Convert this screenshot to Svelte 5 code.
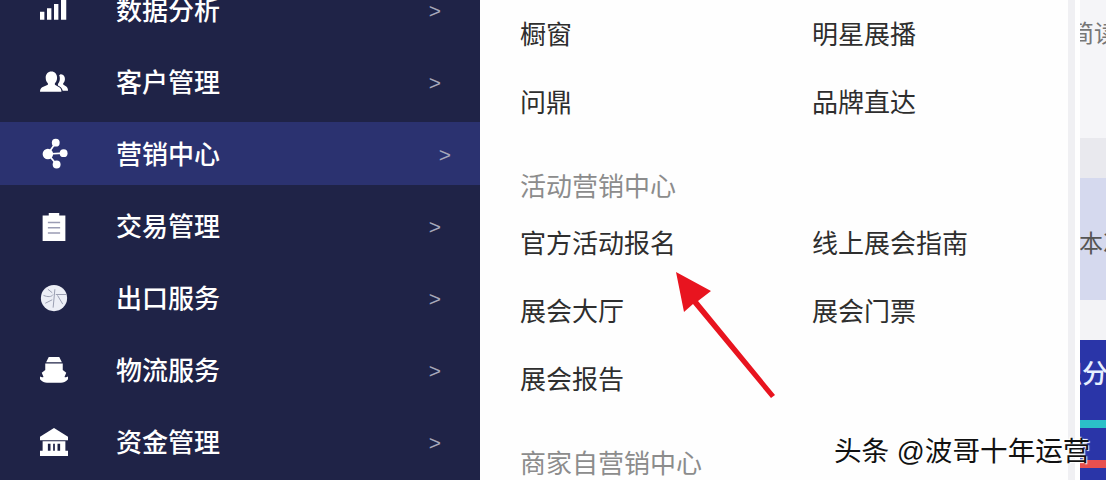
<script lang="ts">
  const navItems = [
    { label: "数据分析", icon: "chart" },
    { label: "客户管理", icon: "users" },
    { label: "营销中心", icon: "nodes", active: true },
    { label: "交易管理", icon: "clipboard" },
    { label: "出口服务", icon: "globe" },
    { label: "物流服务", icon: "ship" },
    { label: "资金管理", icon: "bank" }
  ];

  const groups = [
    { title: "", items: ["橱窗", "明星展播", "问鼎", "品牌直达"] },
    { title: "活动营销中心", items: ["官方活动报名", "线上展会指南", "展会大厅", "展会门票", "展会报告"] },
    { title: "商家自营销中心", items: [] }
  ];
</script>

<div class="page">
  <nav class="sidebar">
    {#each navItems as item}
      <div class="nav-row" class:active={item.active}>
        <svg class="nav-icon" viewBox="0 0 32 32" fill="#fff">
          {#if item.icon === "chart"}
            <path d="M0 18h5v9H0zM8 14h5v13H8zM16 9h5v18h-5zM24 -4h6v31h-6z" />
          {:else if item.icon === "users"}
            <path d="M13 4c4 0 6.500 3 6.500 7 0 2.600-1 5-2.500 6.300v1.700l5 3c1.500.9 2.500 2.500 2.500 5H0c0-2.500 1-4 2.500-5l6.500-3v-1.700C7.500 16 6.500 13.600 6.500 11c0-4 2.500-7 6.500-7z" />
            <path d="M24 7c3 0 4.500 2.500 4.500 5.500 0 2-.8 3.700-2 4.800v1.500l3.500 2.200c1.300.8 2 2.500 2 5h-6c-.5-2-1.800-3.900-3.500-4.800l-2-1.200v-1.800c1.400-1.600 2.200-3.700 2.200-6 0-1.400-.2-2.700-.8-3.800.6-.8 1.600-1.400 2.100-1.400z" />
          {:else if item.icon === "nodes"}
            <circle cx="9" cy="16" r="6" />
            <circle cx="18" cy="3" r="4.500" />
            <circle cx="27" cy="15" r="4.500" />
            <circle cx="19" cy="28" r="4.500" />
            <path d="M9 16 18 3M9 16l18-1M9 16l10 12" stroke="#fff" stroke-width="2" />
          {:else if item.icon === "clipboard"}
            <path d="M3 4h7V1h12v3h7v29H3z" />
            <path d="M9 12h14M9 18h14M9 24h14" stroke="#9a9cb4" stroke-width="1.500" />
          {:else if item.icon === "globe"}
            <circle cx="16" cy="16" r="15" fill="#eceef6" />
            <path d="M4 13c5 2 9 2 11-1M17 6l-2 21M18 12h12M20 13l6 10M14 18l-8 4M9 6l5 4" stroke="#8f93a8" stroke-width="1" fill="none" />
          {:else if item.icon === "ship"}
            <path d="M10 1h12l3 6H7z" />
            <path d="M6 8.500h20V16l4 3-2 5c1 .5 2.500.5 4-.5v3c-3 3-5 4-8 4H8c-3 0-5-1-8-4v-3c1.500 1 3 1 4 .5l-2-5 4-3z" />
          {:else if item.icon === "bank"}
            <path d="M16 0 32 10v4H0v-4z" />
            <path d="M3 15h26v11H3zM0 26h32v6H0z" />
            <path d="M9 18h3v8H9zM15 18h2v8h-2zM20 18h3v8h-3z" fill="#1f2347" />
          {/if}
        </svg>
        <span class="nav-label">{item.label}</span>
        <span class="chevron">&gt;</span>
      </div>
    {/each}
  </nav>

  <section class="panel">
    {#each groups as group}
      {#if group.title}
        <h3 class="group-title">{group.title}</h3>
      {/if}
      <div class="group-grid">
        {#each group.items as name}
          <div class="group-item">{name}</div>
        {/each}
      </div>
    {/each}
  </section>

  <div class="divider"></div>

  <aside class="edge">
    <div class="edge-top"><span>简读</span></div>
    <div class="edge-band"></div>
    <div class="edge-blue"><span>本次</span></div>
    <div class="edge-gap"></div>
    <div class="edge-dark">
      <span class="edge-score">积分</span>
      <i class="stripe teal"></i>
      <i class="stripe red"></i>
    </div>
  </aside>

  <svg class="arrow" viewBox="0 0 1106 480" width="1106" height="480">
    <path d="M676 272 711 291 698 301 775 395 771 398 693 304 684 312z" fill="#e8141f" />
  </svg>

  <div class="watermark">头条 @波哥十年运营</div>
</div>

<style>
  :global(body) {
    margin: 0;
    background: #fff;
  }

  .page {
    position: relative;
    display: flex;
    width: 1106px;
    height: 480px;
    overflow: hidden;
    font-family: "Liberation Sans", "Noto Sans CJK SC", sans-serif;
  }

  .sidebar {
    flex: 0 0 480px;
    display: flex;
    flex-direction: column;
    gap: 9px;
    margin-top: -22px;
    background: #1f2347;
  }

  .nav-row {
    flex: 0 0 63px;
    display: flex;
    align-items: center;
    padding-left: 40px;
    color: #fff;
  }

  .nav-row.active {
    background: #2b3270;
  }

  .nav-icon {
    flex: 0 0 28px;
    width: 28px;
    height: 28px;
    overflow: visible;
  }

  .nav-label {
    margin-left: 48px;
    padding-top: 2px;
    font-size: 26px;
    font-weight: 500;
    line-height: 1;
    flex: 1;
  }

  .chevron {
    margin-right: 39px;
    padding-top: 1px;
    font-size: 21px;
    line-height: 1;
    color: #a6a8ba;
  }

  .nav-row.active .chevron {
    margin-right: 29px;
  }

  .panel {
    flex: 0 0 548px;
    padding: 0 0 0 40px;
    background: #fefefe;
    margin-top: -2px;
  }

  .group-title {
    height: 40px;
    margin: 33px 0 0;
    font-size: 26px;
    font-weight: 400;
    line-height: 40px;
    color: #8c8c8c;
  }

  .group-grid {
    display: grid;
    grid-template-columns: 292px 1fr;
    grid-auto-rows: 68px;
  }

  .group-item {
    display: flex;
    align-items: center;
    font-size: 26px;
    color: #2e2e2e;
  }

  .divider {
    flex: 0 0 7px;
    margin-right: 5px;
    background: #f0f0f3;
  }

  .edge {
    flex: 1;
    display: flex;
    flex-direction: column;
    overflow: hidden;
    font-size: 24px;
    white-space: nowrap;
  }

  .edge-top {
    flex: 0 0 138px;
    box-sizing: border-box;
    padding-top: 14px;
    background: #f5f5f8;
    color: #777;
  }

  .edge-top span {
    margin-left: -10px;
  }

  .edge-band {
    flex: 0 0 40px;
    background: #e9e9ee;
  }

  .edge-blue {
    flex: 0 0 122px;
    box-sizing: border-box;
    padding-top: 46px;
    background: #d5d9ee;
    color: #555;
  }

  .edge-blue span {
    margin-left: -1px;
  }

  .edge-gap {
    flex: 0 0 40px;
    background: #f3f3f6;
  }

  .edge-dark {
    flex: 1;
    position: relative;
    background: #2a35a8;
    color: #e8f0ff;
  }

  .edge-score {
    position: absolute;
    top: 13px;
    left: -24px;
    font-size: 26px;
    font-weight: 500;
  }

  .stripe {
    position: absolute;
    left: 0;
    width: 100%;
    height: 8px;
  }

  .teal {
    top: 80px;
    background: #2bc0c8;
  }

  .red {
    top: 120px;
    background: #e8504f;
  }

  .arrow {
    position: absolute;
    top: 0;
    left: 0;
    pointer-events: none;
  }

  .watermark {
    position: absolute;
    top: 434px;
    left: 834px;
    font-size: 27.6px;
    line-height: 36px;
    white-space: nowrap;
    color: #111;
    text-shadow: 1px 1px 1px #fff, -1px -1px 1px #fff;
  }
</style>
